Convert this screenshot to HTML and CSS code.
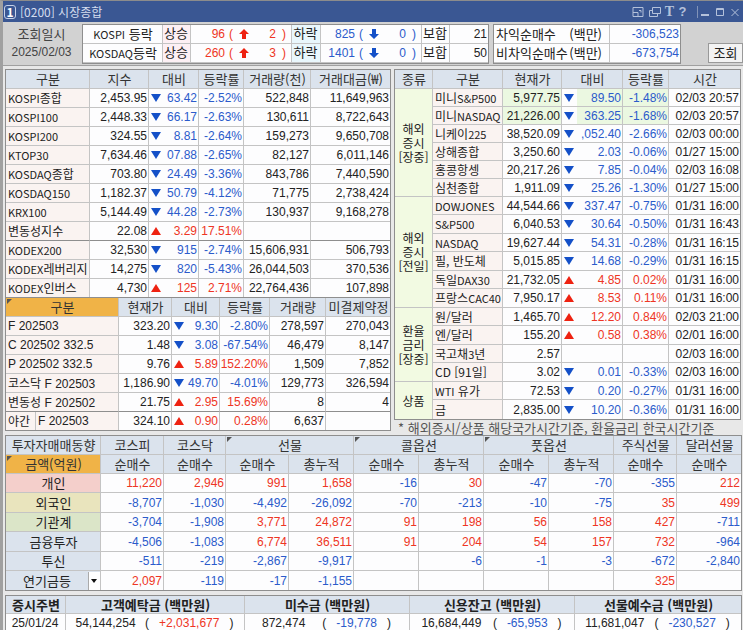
FILE: index.html
```html
<!DOCTYPE html>
<html lang="ko">
<head>
<meta charset="utf-8">
<title>[0200] 시장종합</title>
<link rel="stylesheet" href="styles.css">
</head>
<body>
<header class="titlebar">
  <span class="badge">1</span>
  <h1>[0200] 시장종합</h1>
  <div class="tools">
    <button class="w18" aria-label="축소"><svg width="12" height="12" viewBox="0 0 12 12"><path d="M1 1.500h10v9H1zM1 6.500h5v4M7 4.500h2v2"/></svg></button>
    <button class="w16" aria-label="복사"><svg width="12" height="12" viewBox="0 0 12 12"><path d="M3.500 1.500h8v6h-8zM3 4.500H.5v6h8V8"/></svg></button>
    <button class="w13 serif" aria-label="글꼴">T</button>
    <button class="w13" aria-label="도움말">?</button>
    <span class="sep"></span>
    <button class="w14" aria-label="최소화"><svg width="10" height="12" viewBox="0 0 10 12"><path d="M1 9h8" stroke-width="2"/></svg></button>
    <button class="w15" aria-label="최대화"><svg width="10" height="12" viewBox="0 0 10 12"><path d="M1.500 2.500h7v7h-7zM1 3.500h8"/></svg></button>
    <button class="w16" aria-label="닫기"><svg width="10" height="12" viewBox="0 0 10 12"><path d="M1.500 3l7 7M8.500 3l-7 7"/></svg></button>
  </div>
</header>

<section class="summary">
  <div class="asof"><span>조회일시</span><span class="n">2025/02/03</span></div>
  <table class="grid breadth">
    <colgroup><col class="c80"><col class="c28"><col class="c101"><col class="c29"><col class="c101"><col class="c28"><col class="c38"></colgroup>
    <tr><th class="plain"><span class="lat">KOSPI</span> 등락</th><td class="rise">상승</td>
      <td class="up"><div class="count"><b>96</b><i>(</i><svg width="10" height="10" viewBox="0 0 10 10"><path d="M5 0l5 5H7v5H3V5H0z"/></svg><b>2</b><i>)</i></div></td>
      <td class="fall">하락</td>
      <td class="dn"><div class="count"><b>825</b><i>(</i><svg width="10" height="10" viewBox="0 0 10 10"><path d="M5 10l5-5H7V0H3v5H0z"/></svg><b>0</b><i>)</i></div></td>
      <td class="mid">보합</td><td>21</td></tr>
    <tr><th class="plain"><span class="lat">KOSDAQ</span>등락</th><td class="rise">상승</td>
      <td class="up"><div class="count"><b>260</b><i>(</i><svg width="10" height="10" viewBox="0 0 10 10"><path d="M5 0l5 5H7v5H3V5H0z"/></svg><b>3</b><i>)</i></div></td>
      <td class="fall">하락</td>
      <td class="dn"><div class="count"><b>1401</b><i>(</i><svg width="10" height="10" viewBox="0 0 10 10"><path d="M5 10l5-5H7V0H3v5H0z"/></svg><b>0</b><i>)</i></div></td>
      <td class="mid">보합</td><td>50</td></tr>
  </table>
  <table class="grid program">
    <colgroup><col class="c116"><col class="c70"></colgroup>
    <tr><th class="plain"><span class="split"><span>차익순매수</span><span>(백만)</span></span></th><td class="dn">-306,523</td></tr>
    <tr><th class="plain"><span class="split"><span>비차익순매수</span><span>(백만)</span></span></th><td class="dn">-673,754</td></tr>
  </table>
  <button class="query">조회</button>
</section>

<main>
<div class="columns">
  <div class="left">
    <table class="grid index">
      <colgroup><col class="c84"><col class="c59"><col class="c50"><col class="c45"><col class="c67"><col class="c79"></colgroup>
      <thead><tr><th>구분</th><th>지수</th><th>대비</th><th>등락률</th><th>거래량(천)</th><th>거래대금(₩)</th></tr></thead>
      <tbody>
      <tr><th><span class="lat">KOSPI</span>종합</th><td>2,453.95</td><td class="dn arrow">63.42</td><td class="dn">-2.52%</td><td>522,848</td><td>11,649,963</td></tr>
      <tr><th><span class="lat">KOSPI100</span></th><td>2,448.33</td><td class="dn arrow">66.17</td><td class="dn">-2.63%</td><td>130,611</td><td>8,722,643</td></tr>
      <tr><th><span class="lat">KOSPI200</span></th><td>324.55</td><td class="dn arrow">8.81</td><td class="dn">-2.64%</td><td>159,273</td><td>9,650,708</td></tr>
      <tr><th><span class="lat">KTOP30</span></th><td>7,634.46</td><td class="dn arrow">07.88</td><td class="dn">-2.65%</td><td>82,127</td><td>6,011,146</td></tr>
      <tr><th><span class="lat">KOSDAQ</span>종합</th><td>703.80</td><td class="dn arrow">24.49</td><td class="dn">-3.36%</td><td>843,786</td><td>7,440,590</td></tr>
      <tr><th><span class="lat">KOSDAQ150</span></th><td>1,182.37</td><td class="dn arrow">50.79</td><td class="dn">-4.12%</td><td>71,775</td><td>2,738,424</td></tr>
      <tr><th><span class="lat">KRX100</span></th><td>5,144.49</td><td class="dn arrow">44.28</td><td class="dn">-2.73%</td><td>130,937</td><td>9,168,278</td></tr>
      <tr class="rule"><th>변동성지수</th><td>22.08</td><td class="up arrow">3.29</td><td class="up">17.51%</td><td></td><td></td></tr>
      <tr><th><span class="lat">KODEX200</span></th><td>32,530</td><td class="dn arrow">915</td><td class="dn">-2.74%</td><td>15,606,931</td><td>506,793</td></tr>
      <tr><th><span class="lat">KODEX</span>레버리지</th><td>14,275</td><td class="dn arrow">820</td><td class="dn">-5.43%</td><td>26,044,503</td><td>370,536</td></tr>
      <tr><th><span class="lat">KODEX</span>인버스</th><td>4,730</td><td class="up arrow">125</td><td class="up">2.71%</td><td>22,764,436</td><td>107,898</td></tr>
      </tbody>
    </table>
    <table class="grid futures">
      <colgroup><col class="c30"><col class="c83"><col class="c53"><col class="c48"><col class="c50"><col class="c56"><col class="c64"></colgroup>
      <thead><tr><th colspan="2" class="pick corner">구분</th><th>현재가</th><th>대비</th><th>등락률</th><th>거래량</th><th>미결제약정</th></tr></thead>
      <tbody>
      <tr><th colspan="2" class="n">F 202503</th><td>323.20</td><td class="dn arrow">9.30</td><td class="dn">-2.80%</td><td>278,597</td><td>270,043</td></tr>
      <tr><th colspan="2" class="n">C 202502 332.5</th><td>1.48</td><td class="dn arrow">3.08</td><td class="dn">-67.54%</td><td>46,479</td><td>8,147</td></tr>
      <tr><th colspan="2" class="n">P 202502 332.5</th><td>9.76</td><td class="up arrow">5.89</td><td class="up">152.20%</td><td>1,509</td><td>7,852</td></tr>
      <tr><th colspan="2">코스닥 <span class="n">F 202503</span></th><td>1,186.90</td><td class="dn arrow">49.70</td><td class="dn">-4.01%</td><td>129,773</td><td>326,594</td></tr>
      <tr class="rule"><th colspan="2">변동성 <span class="n">F 202502</span></th><td>21.75</td><td class="up arrow">2.95</td><td class="up">15.69%</td><td>8</td><td>4</td></tr>
      <tr><th>야간</th><th class="n">F 202503</th><td>324.10</td><td class="up arrow">0.90</td><td class="up">0.28%</td><td>6,637</td><td></td></tr>
      </tbody>
    </table>
  </div>
  <div class="right">
    <table class="grid world">
      <colgroup><col class="c38"><col class="c70"><col class="c59"><col class="c61"><col class="c46"><col class="c71"></colgroup>
      <thead><tr><th>종류</th><th>구분</th><th>현재가</th><th>대비</th><th>등락률</th><th>시간</th></tr></thead>
      <tbody>
      <tr class="live"><th rowspan="6" class="kind">해외<br>증시<br>[장중]</th><th>미니<span class="lat">S&amp;P500</span></th><td>5,977.75</td><td class="dn arrow">89.50</td><td class="dn">-1.48%</td><td>02/03 20:57</td></tr>
      <tr class="live"><th>미니<span class="lat">NASDAQ</span></th><td>21,226.00</td><td class="dn arrow">363.25</td><td class="dn">-1.68%</td><td>02/03 20:57</td></tr>
      <tr><th>니케이<span class="lat">225</span></th><td>38,520.09</td><td class="dn arrow">,052.40</td><td class="dn">-2.66%</td><td>02/03 00:00</td></tr>
      <tr><th>상해종합</th><td>3,250.60</td><td class="dn arrow">2.03</td><td class="dn">-0.06%</td><td>01/27 15:00</td></tr>
      <tr><th>홍콩항셍</th><td>20,217.26</td><td class="dn arrow">7.85</td><td class="dn">-0.04%</td><td>02/03 16:08</td></tr>
      <tr><th>심천종합</th><td>1,911.09</td><td class="dn arrow">25.26</td><td class="dn">-1.30%</td><td>01/27 15:00</td></tr>
      </tbody>
      <tbody class="tall">
      <tr><th rowspan="6" class="kind">해외<br>증시<br>[전일]</th><th><span class="lat">DOWJONES</span></th><td>44,544.66</td><td class="dn arrow">337.47</td><td class="dn">-0.75%</td><td>01/31 16:00</td></tr>
      <tr><th><span class="lat">S&amp;P500</span></th><td>6,040.53</td><td class="dn arrow">30.64</td><td class="dn">-0.50%</td><td>01/31 16:43</td></tr>
      <tr><th><span class="lat">NASDAQ</span></th><td>19,627.44</td><td class="dn arrow">54.31</td><td class="dn">-0.28%</td><td>01/31 16:15</td></tr>
      <tr><th>필, 반도체</th><td>5,015.85</td><td class="dn arrow">14.68</td><td class="dn">-0.29%</td><td>01/31 16:15</td></tr>
      <tr><th>독일<span class="lat">DAX30</span></th><td>21,732.05</td><td class="up arrow">4.85</td><td class="up">0.02%</td><td>01/31 16:00</td></tr>
      <tr><th>프랑스<span class="lat">CAC40</span></th><td>7,950.17</td><td class="up arrow">8.53</td><td class="up">0.11%</td><td>01/31 16:00</td></tr>
      </tbody>
      <tbody class="tall">
      <tr><th rowspan="4" class="kind">환율<br>금리<br>[장중]</th><th>원/달러</th><td>1,465.70</td><td class="up arrow">12.20</td><td class="up">0.84%</td><td>02/03 21:00</td></tr>
      <tr><th>엔/달러</th><td>155.20</td><td class="up arrow">0.58</td><td class="up">0.38%</td><td>02/01 16:00</td></tr>
      <tr><th>국고채<span class="lat">3</span>년</th><td>2.57</td><td></td><td></td><td>02/03 16:00</td></tr>
      <tr><th>CD [91일]</th><td>3.02</td><td class="dn arrow">0.01</td><td class="dn">-0.33%</td><td>02/03 16:00</td></tr>
      <tr><th rowspan="2" class="kind">상품</th><th><span class="lat">WTI</span> 유가</th><td>72.53</td><td class="dn arrow">0.20</td><td class="dn">-0.27%</td><td>01/31 16:00</td></tr>
      <tr><th>금</th><td>2,835.00</td><td class="dn arrow">10.20</td><td class="dn">-0.36%</td><td>01/31 16:00</td></tr>
      </tbody>
    </table>
    <p class="note">* 해외증시/상품 해당국가시간기준, 환율금리 한국시간기준</p>
  </div>
</div>

<table class="grid investors">
  <colgroup><col class="c95"><col class="c63"><col class="c62"><col class="c63"><col class="c65"><col class="c65"><col class="c65"><col class="c65"><col class="c65"><col class="c63"><col class="c64"></colgroup>
  <thead>
  <tr><th>투자자매매동향</th><th>코스피</th><th>코스닥</th><th colspan="2" class="corner">선물</th><th colspan="2" class="corner">콜옵션</th><th colspan="2" class="corner">풋옵션</th><th>주식선물</th><th>달러선물</th></tr>
  <tr><th class="pick corner">금액(억원)</th><th>순매수</th><th>순매수</th><th>순매수</th><th>총누적</th><th>순매수</th><th>총누적</th><th>순매수</th><th>총누적</th><th>순매수</th><th>순매수</th></tr>
  </thead>
  <tbody>
  <tr><th class="pink">개인</th><td class="up">11,220</td><td class="up">2,946</td><td class="up">991</td><td class="up">1,658</td><td class="dn">-16</td><td class="up">30</td><td class="dn">-47</td><td class="dn">-70</td><td class="dn">-355</td><td class="up">212</td></tr>
  <tr><th class="sand">외국인</th><td class="dn">-8,707</td><td class="dn">-1,030</td><td class="dn">-4,492</td><td class="dn">-26,092</td><td class="dn">-70</td><td class="dn">-213</td><td class="dn">-10</td><td class="dn">-75</td><td class="up">35</td><td class="up">499</td></tr>
  <tr><th class="sage">기관계</th><td class="dn">-3,704</td><td class="dn">-1,908</td><td class="up">3,771</td><td class="up">24,872</td><td class="up">91</td><td class="up">198</td><td class="up">56</td><td class="up">158</td><td class="up">427</td><td class="dn">-711</td></tr>
  <tr><th>금융투자</th><td class="dn">-4,506</td><td class="dn">-1,083</td><td class="up">6,774</td><td class="up">36,511</td><td class="up">91</td><td class="up">204</td><td class="up">54</td><td class="up">157</td><td class="up">732</td><td class="dn">-964</td></tr>
  <tr><th>투신</th><td class="dn">-511</td><td class="dn">-219</td><td class="dn">-2,867</td><td class="dn">-9,917</td><td></td><td class="dn">-6</td><td class="dn">-1</td><td class="dn">-3</td><td class="dn">-672</td><td class="dn">-2,840</td></tr>
  <tr><th><div class="chooser"><select aria-label="투자자"><option>연기금등</option></select><span class="caret"></span></div></th><td class="up">2,097</td><td class="dn">-119</td><td class="dn">-17</td><td class="dn">-1,155</td><td></td><td></td><td></td><td></td><td class="up">325</td><td></td></tr>
  </tbody>
</table>

<table class="grid funds">
  <colgroup><col class="c60"><col class="c179"><col class="c165"><col class="c165"><col class="c166"></colgroup>
  <thead><tr><th>증시주변</th><th>고객예탁금 (백만원)</th><th>미수금 (백만원)</th><th>신용잔고 (백만원)</th><th>선물예수금 (백만원)</th></tr></thead>
  <tbody><tr><td>25/01/24</td>
    <td><div class="fund"><span>54,144,254</span><span class="delta"><i>(</i><b class="up">+2,031,677</b><i>)</i></span></div></td>
    <td><div class="fund"><span>872,474</span><span class="delta"><i>(</i><b class="dn">-19,778</b><i>)</i></span></div></td>
    <td><div class="fund"><span>16,684,449</span><span class="delta"><i>(</i><b class="dn">-65,953</b><i>)</i></span></div></td>
    <td><div class="fund"><span>11,681,047</span><span class="delta"><i>(</i><b class="dn">-230,527</b><i>)</i></span></div></td></tr></tbody>
</table>
</main>
</body>
</html>
```

FILE: styles.css
```css
* { box-sizing: border-box; }
html { background: #e8e8e8; }
body {
  margin: 0;
  min-height: 100vh;
  overflow: hidden;
  border-top: 1px solid #8c8c8c;
  border-left: 3px solid #a0a0a0;
  background: #e8e8e8;
  color: #222;
  font: 13px/16px "Noto Sans CJK KR", sans-serif;
}
button, select { font: inherit; color: inherit; padding: 0; margin: 0; }
i { font-style: normal; }
b { font-weight: normal; }
.n, td { font-family: "Liberation Sans", "Noto Sans CJK KR", sans-serif; font-size: 12px; }
.n, .lat { line-height: 12px; }
.lat { font-size: 11px; }

.titlebar { display: flex; align-items: center; height: 21px; padding-left: 1px; background: #3a5793; color: #d5deef; }
.badge {
  width: 12px; height: 14px; line-height: 12px; text-align: center;
  border: 1px solid #c5d1e8; border-radius: 3px; font-size: 12px; font-weight: bold; color: #fff;
}
.titlebar h1 { flex: 1; margin: 0 0 0 4px; font-size: 12px; font-weight: normal; }
.tools { display: flex; align-items: center; }
.tools button { display: flex; justify-content: center; align-items: center; height: 18px; border: 0; background: none; color: #b4c1da; font: bold 13px "Liberation Sans", sans-serif; }
.tools .serif { font-family: "Liberation Serif", serif; font-size: 14px; }
.tools svg { flex: none; fill: none; stroke: #b4c1da; }
.sep { width: 9px; height: 12px; border-right: 1px solid #8193b8; }
.w13 { width: 13px; } .w14 { width: 14px; } .w15 { width: 15px; } .w16 { width: 16px; } .w18 { width: 18px; }

.summary { display: flex; align-items: flex-start; gap: 4px; padding: 2px 2px 1px; background: #d2d2d2; border-bottom: 1px solid #a0a0a0; }
.asof { display: flex; flex-direction: column; width: 73px; flex: none; text-align: center; color: #444; }
.asof span { line-height: 19px; }
.summary .breadth { flex: 407 1 0; width: 0; }
.summary .program { flex: 188 1 0; width: 0; }
.query { flex: none; width: 35px; height: 20px; margin: 19px 0 0 23px; border: 1px solid #999; background: #f3f3f3; line-height: 16px; }

main { padding: 3px 2px 0; }
.columns { display: flex; gap: 3px; }
.left { flex: 386 1 0; }
.right { flex: 347 1 0; }

.grid { width: 100%; table-layout: fixed; border-collapse: separate; border-spacing: 0; border: 1px solid #8e8e8e; background: #fdfdfe; }
.grid th, .grid td { height: 19px; padding: 0 1px 0 2px; border-right: 1px solid #c4c4c4; border-bottom: 1px solid #c4c4c4; line-height: 16px; white-space: nowrap; overflow: hidden; font-weight: normal; }
.grid tr > :last-child { border-right: 0; }
.grid td { text-align: right; padding: 0 1px 0 0; }
.grid th { text-align: left; background: #faf3f1; }
.grid tbody th { font-size: 12px; }
.grid thead th { text-align: center; background: #dbe3ed; color: #333; }
.grid th.plain { background: #fdfdfe; text-align: center; font-size: 13px; }
.up, .grid td.up { color: #ee3524; }
.dn, .grid td.dn { color: #2b5bcb; }
.arrow::before { content: ""; float: left; margin: 4px 0 0 2px; border: 5px solid transparent; }
.arrow.dn::before { border-width: 8px 5px 0; border-top-color: #1450c8; }
.arrow.up::before { border-width: 0 5px 8px; border-bottom-color: #ee2211; }
.grid .rule > * { border-bottom-color: #8e8e8e; }

.grid td.rise, .grid td.fall, .grid td.mid { font-size: 13px; text-align: center; }
.rise { background: #fdf0f4; }
.fall { background: #e9f7fc; }
.count { display: grid; grid-template-columns: 34px 8px 16px 27px 10px; align-items: center; }
.count svg { justify-self: end; fill: #ee2211; }
.dn .count svg { fill: #1450c8; }
.split { display: flex; justify-content: space-between; padding-right: 6px; }

.index { border-bottom: 0; }
.index tbody tr:last-child > * { border-bottom: 0; height: 18px; }
.grid thead th.pick { background: #f0b347; }
.corner { position: relative; }
.corner::before { content: ""; position: absolute; left: 1px; top: 1px; border-top: 5px solid #555; border-right: 5px solid transparent; }
.futures tbody tr:last-child > * { border-bottom: 0; height: 18px; }

.grid.world tbody th, .grid.world tbody td { height: 18px; }
.grid.world .tall tr:nth-child(even) > * { height: 19px; }
.world .tall:last-child tr:last-child > * { border-bottom: 0; }
.grid th.kind { background: #f2fae2; text-align: center; line-height: 14px; padding: 0; white-space: normal; }
.world .tall:last-child tr:nth-child(5) > .kind { border-bottom: 0; }
.live td { background: #ebf8e1; }
.live td.arrow { background: linear-gradient(90deg, #fdfdfe 15px, #ebf8e1 15px); }
.live td:last-child { background: #fdfdfe; }
.note { margin: 0; padding: 0 4px; line-height: 15px; color: #555; white-space: nowrap; }

.investors tbody tr:nth-child(even) > * { height: 20px; }
.investors tbody tr:last-child > * { height: 19px; border-bottom: 0; }
.grid.investors tbody th { text-align: center; background: #dbe3ed; font-size: 13px; }
.grid.investors tbody th.pink { background: #f4cfcb; }
.grid.investors tbody th.sand { background: #e9e4bd; }
.grid.investors tbody th.sage { background: #dbe5c8; }
.chooser { position: relative; margin: 0 -1px 0 -2px; }
.chooser select { display: block; width: 100%; height: 18px; padding-right: 12px; border: 0; background: none; appearance: none; text-align: center; text-align-last: center; }
.caret { position: absolute; right: 0; top: 0; width: 12px; height: 18px; background: #fff; border-left: 1px solid #aaa; pointer-events: none; }
.caret::before { content: ""; position: absolute; left: 2px; top: 7px; border: 3px solid transparent; border-top: 4px solid #111; border-bottom: 0; }

.funds { margin-top: 4px; }
.grid.funds thead th { font-weight: bold; height: 18px; color: #222; }
.grid.funds td:first-child { text-align: center; }
.fund { display: flex; justify-content: space-evenly; }
.delta { display: flex; gap: 10px; }

.c28 { width: 28px; } .c29 { width: 29px; } .c30 { width: 30px; } .c38 { width: 38px; }
.c45 { width: 45px; } .c46 { width: 46px; } .c48 { width: 48px; } .c50 { width: 50px; }
.c53 { width: 53px; } .c56 { width: 56px; } .c59 { width: 59px; } .c60 { width: 60px; }
.c61 { width: 61px; } .c62 { width: 62px; } .c63 { width: 63px; } .c64 { width: 64px; }
.c65 { width: 65px; } .c67 { width: 67px; } .c70 { width: 70px; } .c71 { width: 71px; }
.c79 { width: 79px; } .c80 { width: 80px; } .c83 { width: 83px; } .c84 { width: 84px; }
.c95 { width: 95px; } .c101 { width: 101px; } .c116 { width: 116px; } .c165 { width: 165px; }
.c166 { width: 166px; } .c179 { width: 179px; }
```
